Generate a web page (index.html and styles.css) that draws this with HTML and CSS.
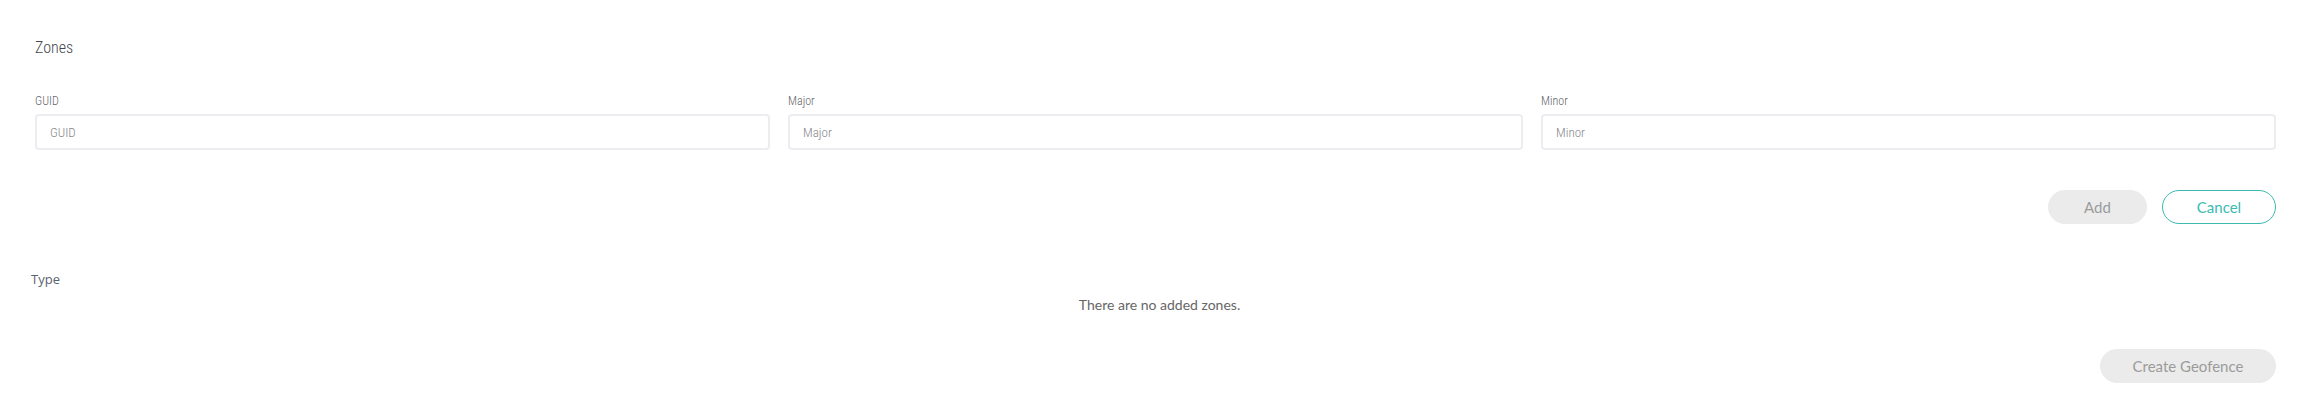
FILE: index.html
```html
<!DOCTYPE html>
<html>
<head>
<meta charset="utf-8">
<link rel="stylesheet" href="styles.css">
</head>
<body>
<div class="page">
  <section class="zones">
    <h2 class="title">Zones</h2>
    <div class="fields">
      <label class="field">
        <span class="label">GUID</span>
        <input class="input" placeholder="GUID">
      </label>
      <label class="field">
        <span class="label">Major</span>
        <input class="input" placeholder="Major">
      </label>
      <label class="field">
        <span class="label">Minor</span>
        <input class="input" placeholder="Minor">
      </label>
    </div>
    <div class="actions">
      <button class="btn btn-disabled btn-add">Add</button>
      <button class="btn btn-outline btn-cancel">Cancel</button>
    </div>
  </section>
  <section class="list">
    <div class="type">Type</div>
    <div class="empty">There are no added zones.</div>
  </section>
  <div class="footer">
    <button class="btn btn-disabled btn-create">Create Geofence</button>
  </div>
</div>
</body>
</html>
```

FILE: styles.css
```css
* { box-sizing: border-box; }
html, body { margin: 0; background: #fff; }
body { font-family: "Lato", "Open Sans", sans-serif; }

.page {
  width: 2301px;
  height: 416px;
  padding: 0 25px 0 0;
}

.zones {
  padding: 38px 0 0 35px;
}

.title {
  margin: 0;
  font-family: "Roboto Condensed", "Roboto", sans-serif;
  font-weight: 300;
  font-size: 16px;
  line-height: 20px;
  color: #44484e;
}

.fields {
  display: grid;
  grid-template-columns: repeat(3, 1fr);
  column-gap: 18px;
  margin-top: 36px;
}

.field {
  display: flex;
  flex-direction: column;
}

.label {
  font-family: "Roboto Condensed", "Roboto", sans-serif;
  font-weight: 300;
  font-size: 12px;
  line-height: 14px;
  color: #5f6368;
  margin-bottom: 6px;
}

.input {
  height: 36px;
  border: 2px solid #ececf1;
  border-radius: 4px;
  padding: 0 13px;
  font-family: "Roboto Condensed", "Roboto", sans-serif;
  font-weight: 300;
  font-size: 13px;
  color: #555;
  outline: none;
  background: #fff;
}
.input::placeholder { color: #85878b; }

.actions {
  display: flex;
  justify-content: flex-end;
  gap: 15px;
  margin-top: 40px;
}

.btn {
  height: 34px;
  border-radius: 17px;
  font-family: "Lato", "Open Sans", sans-serif;
  font-size: 15px;
  padding: 0;
  cursor: pointer;
}

.btn-disabled {
  background: #ebebeb;
  border: 1px solid #ebebeb;
  color: #9b9b9b;
}

.btn-outline {
  background: #fff;
  border: 1px solid #3cbab2;
  color: #3cbab2;
}

.btn-add { width: 99px; }
.btn-cancel { width: 114px; }
.btn-create { width: 176px; }

.list {
  padding: 46px 0 0 31px;
  height: 125px;
}

.type {
  font-family: "Open Sans", sans-serif;
  font-size: 13px;
  line-height: 18px;
  color: #5b6270;
}

.empty {
  text-align: center;
  margin-left: -31px;
  padding-left: 43px;
  margin-top: 8px;
  font-family: "Lato", "Open Sans", sans-serif;
  font-size: 14px;
  line-height: 18px;
  color: #666;
}

.footer {
  display: flex;
  justify-content: flex-end;
}
```
